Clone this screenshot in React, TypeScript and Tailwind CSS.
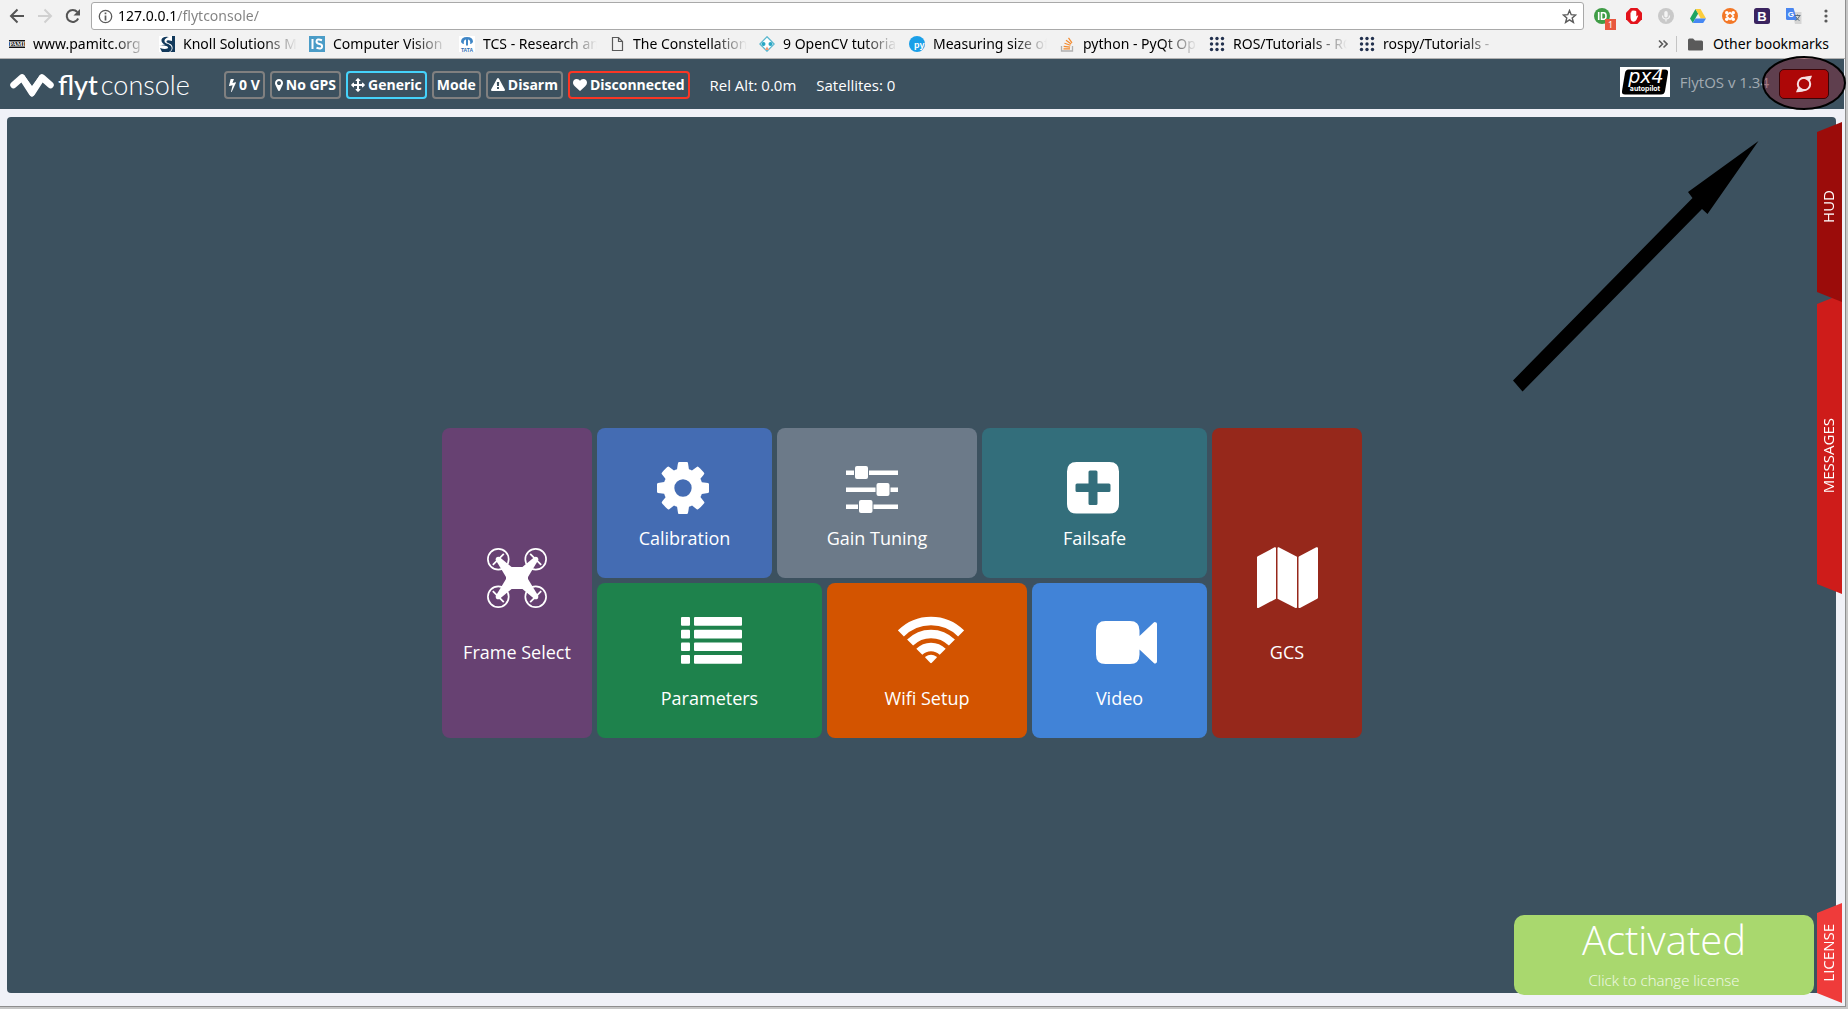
import React from "react";

type P = { children?: React.ReactNode };

/* ---------- small icon helpers ---------- */

function Glyph({ box, w, h, d }: { box: string; w: number; h: number; d: string }) {
  return (
    <svg viewBox={box} width={w} height={h} fill="currentColor" aria-hidden="true" className="shrink-0">
      <path d={d} />
    </svg>
  );
}

const BOLT =
  "M1333 566q18 20 7 44l-540 1157q-13 25-42 25-4 0-14-2-17-5-25.500-19t-4.500-30l197-808-406 101q-4 1-12 1-18 0-31-11-18-15-13-39l201-825q4-14 16-23t28-9h328q19 0 32 12.500t13 29.500q0 8-5 18l-171 463 396-98q8-2 12-2 19 0 34 15z";
const MARKER =
  "M1152 640q0-106-75-181t-181-75-181 75-75 181 75 181 181 75 181-75 75-181zm256 0q0 109-33 179l-364 774q-16 33-47.500 52t-67.500 19-67.500-19-46.500-52l-365-774q-33-70-33-179 0-212 150-362t362-150 362 150 150 362z";
const ARROWS =
  "M1792 896q0 26-19 45l-256 256q-19 19-45 19t-45-19-19-45v-128h-384v384h128q26 0 45 19t19 45-19 45l-256 256q-19 19-45 19t-45-19l-256-256q-19-19-19-45t19-45 45-19h128v-384h-384v128q0 26-19 45t-45 19-45-19l-256-256q-19-19-19-45t19-45l256-256q19-19 45-19t45 19 19 45v128h384v-384h-128q-26 0-45-19t-19-45 19-45l256-256q19-19 45-19t45 19l256 256q19 19 19 45t-19 45-45 19h-128v384h384v-128q0-26 19-45t45-19 45 19l256 256q19 19 19 45z";
const WARNING =
  "M1024 1375v-190q0-14-9.500-23.500t-22.500-9.500h-192q-13 0-22.500 9.500t-9.500 23.500v190q0 14 9.500 23.500t22.500 9.500h192q13 0 22.500-9.500t9.500-23.500zm-2-374l18-459q0-12-10-19-13-11-24-11h-220q-11 0-24 11-10 7-10 21l17 457q0 10 10 16.500t24 6.500h185q14 0 23.500-6.500t10.500-16.500zm-14-934l768 1408q35 63-2 126-17 29-46.500 46t-63.500 17h-1536q-34 0-63.500-17t-46.500-46q-37-63-2-126l768-1408q17-31 47-49t65-18 65 18 47 49z";
const HEART =
  "M896 1664q-26 0-44-18l-624-602q-10-8-27.500-26t-55.500-65.500-68-97.500-53.500-121-23.500-138q0-220 127-344t351-124q62 0 126.500 21.500t120 58 95.500 68.500 76 68q36-36 76-68t95.500-68.500 120-58 126.500-21.500q224 0 351 124t127 344q0 221-229 450l-623 600q-18 18-44 18z";
const COG =
  "M1152 896q0-106-75-181t-181-75-181 75-75 181 75 181 181 75 181-75 75-181zm512-109v222q0 12-8 23t-20 13l-185 28q-19 54-39 91 35 50 107 138 10 12 10 25t-9 23q-27 37-99 108t-94 71q-12 0-26-9l-138-108q-44 23-91 38-16 136-29 186-7 28-36 28h-222q-14 0-24.500-8.500t-11.500-21.500l-28-184q-49-16-90-37l-141 107q-10 9-25 9-14 0-25-11-126-114-165-168-7-10-7-23 0-12 8-23 15-21 51-66.500t54-70.500q-27-50-41-99l-183-27q-13-2-21-12.500t-8-23.500v-222q0-12 8-23t19-13l186-28q14-46 39-92-40-57-107-138-10-12-10-24 0-10 9-23 26-36 98.500-107.500t94.500-71.500q13 0 26 10l138 107q44-23 91-38 16-136 29-186 7-28 36-28h222q14 0 24.500 8.500t11.500 21.500l28 184q49 16 90 37l142-107q9-9 24-9 13 0 25 10 129 119 165 170 7 8 7 22 0 12-8 23-15 21-51 66.500t-54 70.500q26 50 41 98l183 28q13 2 21 12.500t8 23.500z";

function Svg({ w, h, children }: P & { w: number; h: number }) {
  return (
    <svg width={w} height={h} viewBox={`0 0 ${w} ${h}`} fill="none" aria-hidden="true" className="shrink-0">
      {children}
    </svg>
  );
}

/* ---------- tile icons ---------- */

function DroneIcon() {
  const rotors = [
    [11.3, 11.3],
    [48.7, 11.3],
    [11.3, 48.7],
    [48.7, 48.7],
  ];
  return (
    <Svg w={60} h={60}>
      <g fill="#fff" stroke="#fff">
        {rotors.map(([x, y]) => (
          <g key={`${x}-${y}`}>
            <circle cx={x} cy={y} r="10.400" fill="none" strokeWidth="1.700" />
            <circle cx={x} cy={y} r="2.600" stroke="none" />
            <path
              d={(x < 30) === (y < 30) ? `M${x - 5.5} ${y + 5.5}L${x + 5.5} ${y - 5.5}` : `M${x - 5.5} ${y - 5.5}L${x + 5.5} ${y + 5.5}`}
              strokeWidth="1.800"
            />
          </g>
        ))}
        <g stroke="none">
          <path d="M9 12.500 12.500 9 27 21v8h-8z" />
          <path d="M51 12.500 47.500 9 33 21v8h8z" />
          <path d="M9 47.500 12.500 51 27 39v-8h-8z" />
          <path d="M51 47.500 47.500 51 33 39v-8h8z" />
          <path d="M22 19h16l3 3v16l-3 3H22l-3-3V22z" />
        </g>
      </g>
    </Svg>
  );
}

function SlidersIcon() {
  return (
    <Svg w={52} h={47}>
      <g fill="#fff">
        <path d="M0 4.500h8v4.500H0zM23 4.500h29v4.500H23zM0 21.500h29.500v4.500H0zM44.500 21.500H52v4.500h-7.500zM0 38.500h12v4.500H0zM27.500 38.500H52v4.500H27.500z" />
        <rect x="9" y="0" width="13" height="13" rx="2" />
        <rect x="30.500" y="17" width="13" height="13" rx="2" />
        <rect x="13" y="34" width="13.500" height="13" rx="2" />
      </g>
    </Svg>
  );
}

function PlusSquareIcon() {
  return (
    <Svg w={52} h={52}>
      <path
        fill="#fff"
        fillRule="evenodd"
        d="M9.500 0h33Q52 0 52 9.500v32.500Q52 51.500 42.500 51.500h-33Q0 51.500 0 42V9.500Q0 0 9.500 0zM23 8.500q-1.500 0-1.500 1.500v11.500H10q-1.500 0-1.500 1.500v5.500q0 1.500 1.500 1.500h11.500v11.500q0 1.500 1.500 1.500h6q1.500 0 1.500-1.500V30H42q1.500 0 1.500-1.500V23q0-1.500-1.500-1.500H30.500V10q0-1.500-1.500-1.500z"
      />
    </Svg>
  );
}

function ListIcon() {
  return (
    <Svg w={61} h={48}>
      <g fill="#fff">
        {[1, 13.7, 26.4, 39.1].map((y) => (
          <g key={y}>
            <rect x="0" y={y} width="9" height="8.700" rx="1" />
            <rect x="13" y={y} width="48" height="8.700" rx="1" />
          </g>
        ))}
      </g>
    </Svg>
  );
}

function WifiIcon() {
  return (
    <Svg w={66} h={48}>
      <g stroke="#fff" strokeWidth="8.500" strokeLinejoin="round">
        <path d="M2.900 17.400A42.500 42.500 0 0 1 63.100 17.400" />
        <path d="M12.100 26.600A29.500 29.500 0 0 1 53.900 26.600" />
        <path d="M21.300 35.800A16.500 16.500 0 0 1 44.700 35.800" />
      </g>
      <path d="M27.300 40.800Q33 36.600 38.700 40.800 39 41.200 38.600 41.700L33.800 46.800Q33 47.500 32.200 46.800L27.400 41.700Q27 41.200 27.300 40.800z" fill="#fff" />
    </Svg>
  );
}

function VideoIcon() {
  return (
    <Svg w={61} h={48}>
      <path
        fill="#fff"
        d="M9.500 5h24.500q9.500 0 9.500 9.500V20L57.800 6.500Q58.500 5.800 59.500 6.200 61 6.500 61 8v37.500q0 1.500-1.500 2Q58.500 47.700 57.800 47L43.500 33.500v5q0 9.500-9.500 9.500H9.500Q0 48 0 38.500v-24Q0 5 9.500 5z"
      />
    </Svg>
  );
}

function MapIcon() {
  return (
    <Svg w={61} h={61}>
      <g fill="#fff">
        <path d="M.8 9.300 17.500.3q1.500-.6 1.500 1V51.700L1.500 61Q0 61.500 0 60V10.500q0-.8.800-1.200z" />
        <path d="M20.500 1q0-1 1.200-.7L40 9.800V60q0 1.300-1.500 1L20.500 51.700z" />
        <path d="M42.300 9.300 59.300.3Q61-.3 61 1.300V50.500q0 .8-.8 1.200L43 61q-1.500.500-1.500-1V10.500q0-.8.800-1.200z" />
      </g>
    </Svg>
  );
}

/* ---------- browser chrome ---------- */

const dots = [2.5, 8, 13.5];

const bookmarks: { label: string; icon: React.ReactNode }[] = [
  {
    label: "www.pamitc.org",
    icon: (
      <Svg w={16} h={16}>
        <path d="M0 4.500h16M0 11.500h16" stroke="#111" />
        <rect y="5.500" width="16" height="5" fill="#222" />
        <text x="8" y="10.300" fontSize="6" fontWeight="700" fill="#fff" textAnchor="middle" fontFamily="Liberation Serif">PAMI</text>
      </Svg>
    ),
  },
  {
    label: "Knoll Solutions Ma",
    icon: (
      <Svg w={16} h={16}>
        <rect width="16" height="16" fill="#fff" />
        <path d="M16 0v16h-5q3-2 2.500-5Q13 8 9 7 7 6.300 7.500 5 8.500 3.500 13 5V0z" fill="#12395b" />
        <path d="M0 9.500q4-.5 8 .8 2 1 .5 2.200-3 1-7.500-.5L3 16h7q3.500-2 2.500-5-1-2.500-5-3.500Q5 6.500 5.500 4.500 6 2 10 1 4 0 2.500 3.500 2 7 6 8.500z" fill="#12395b" />
      </Svg>
    ),
  },
  {
    label: "Computer Vision O",
    icon: (
      <Svg w={16} h={16}>
        <rect width="16" height="16" fill="#4a9cc7" />
        <path d="M3.500 3v10M13 4.200Q7.500 2.300 7.500 5.500 7.500 7.500 10.500 8t2.500 3q-.5 2.500-5.500.8" stroke="#fff" strokeWidth="2" />
      </Svg>
    ),
  },
  {
    label: "TCS - Research and",
    icon: (
      <Svg w={16} h={16}>
        <rect width="16" height="16" fill="#fff" />
        <path d="M2 6q0-5 6-5t6 5q-1 2-3 2 1-4-2-4.500v6H7v-6Q4 4 5 8 3 8 2 6z" fill="#3f86c6" />
        <text x="8" y="15.500" fontSize="5" fontWeight="700" fill="#2b6cb0" textAnchor="middle" fontFamily="Liberation Sans">TATA</text>
      </Svg>
    ),
  },
  {
    label: "The Constellation",
    icon: (
      <Svg w={16} h={16}>
        <path d="M3.500 1.500h6l4 4v9h-10zM9.500 1.500v4h4" stroke="#5a5a5a" strokeWidth="1.200" />
      </Svg>
    ),
  },
  {
    label: "9 OpenCV tutorials",
    icon: (
      <Svg w={16} h={16}>
        <path d="M8 .8 15.200 8 8 15.200.8 8z" stroke="#5bb8cf" strokeWidth="1.300" fill="#fff" />
        <path d="M6 14h4L8 10.500z" fill="#f19a7a" />
        <circle cx="4.500" cy="8" r="2" fill="#2aa7c4" />
        <circle cx="11.500" cy="8" r="2" fill="#2aa7c4" />
      </Svg>
    ),
  },
  {
    label: "Measuring size of",
    icon: (
      <Svg w={16} h={16}>
        <circle cx="8" cy="8" r="8" fill="#1a9fe8" />
        <text x="5" y="11.500" fontSize="9" fontWeight="700" fill="#fff" fontFamily="Liberation Sans">py</text>
      </Svg>
    ),
  },
  {
    label: "python - PyQt Op",
    icon: (
      <Svg w={16} h={16}>
        <path d="M2.500 10v5h11v-5" stroke="#b0b0b0" strokeWidth="1.300" />
        <path d="M4.500 12.800h6.500M4.700 10.300l6.400.8M5.500 7.300l6 2M7 4.300l5.200 3.700M9.500 1.800l3.500 5" stroke="#f28a2e" strokeWidth="1.200" />
      </Svg>
    ),
  },
  ...["ROS/Tutorials - RO", "rospy/Tutorials -"].map((label) => ({
    label,
    icon: (
      <Svg w={16} h={16}>
        {dots.flatMap((y) => dots.map((x) => <circle key={`${x}-${y}`} cx={x} cy={y} r="1.700" fill="#22314e" />))}
      </Svg>
    ),
  })),
];

const extensions: { name: string; icon: React.ReactNode; badge?: string }[] = [
  {
    name: "Pushbullet",
    badge: "1",
    icon: (
      <Svg w={16} h={16}>
        <circle cx="8" cy="8" r="8" fill="#3f9c46" />
        <path d="M4.700 4v8M7.500 4.700h2.300q2.200 0 2.200 3.300t-2.200 3.300H7.500z" stroke="#fff" strokeWidth="1.600" />
      </Svg>
    ),
  },
  {
    name: "AdBlock",
    icon: (
      <Svg w={16} h={16}>
        <path d="M4.700 0h6.600L16 4.700v6.600L11.300 16H4.700L0 11.300V4.700z" fill="#e3131b" />
        <path d="M4.500 9V5q0-1 1-.8V3q.8-1 1.600 0 .8-1.500 1.700 0 1-.8 1.500.5v5q1-1.500 2-1l-2 4.500q-.8 1.700-3 1.700Q4.500 13.500 4.500 9z" fill="#fff" />
      </Svg>
    ),
  },
  {
    name: "Voice",
    icon: (
      <Svg w={16} h={16}>
        <circle cx="8" cy="8" r="8" fill="#c9c9c9" />
        <rect x="6.300" y="3" width="3.400" height="6.500" rx="1.700" fill="#f4f4f4" />
        <path d="M4.500 7.500q0 3.500 3.500 3.500t3.500-3.500M8 11v2.500" stroke="#f4f4f4" strokeWidth="1.200" />
      </Svg>
    ),
  },
  {
    name: "Drive",
    icon: (
      <Svg w={16} h={16}>
        <path d="M5.500 1 8.200 5.500 2.800 15 0 10.500z" fill="#1da462" />
        <path d="M5.500 1h5L16 10.500h-5.300z" fill="#fccd3c" />
        <path d="M5.500 10.500H16L13.200 15H2.800z" fill="#4688f4" />
      </Svg>
    ),
  },
  {
    name: "Hub",
    icon: (
      <Svg w={16} h={16}>
        <circle cx="8" cy="8" r="8" fill="#f37726" />
        <path d="M8 4.500 11.500 8 8 11.500 4.500 8z" stroke="#fff" strokeWidth="1.500" />
        <circle cx="4.800" cy="4.800" r="1.800" fill="#fff" />
        <circle cx="11.200" cy="4.800" r="1.800" fill="#fff" />
        <circle cx="4.800" cy="11.200" r="1.800" fill="#fff" />
        <circle cx="11.200" cy="11.200" r="1.800" fill="#fff" />
      </Svg>
    ),
  },
  {
    name: "Bootstrap",
    icon: (
      <Svg w={16} h={16}>
        <rect width="16" height="16" rx="2.500" fill="#3b2460" />
        <text x="8" y="12.500" fontSize="13" fontWeight="700" fill="#fff" textAnchor="middle" fontFamily="Liberation Sans">B</text>
      </Svg>
    ),
  },
  {
    name: "Translate",
    icon: (
      <Svg w={16} h={16}>
        <path d="M6 4h9.500v12H9z" fill="#d5d5d5" />
        <path d="M0 0h7.500L11 12H1.500Q0 12 0 10.500z" fill="#4a86f0" />
        <path d="M8.500 7.500h6M11.500 6.500v1M13.500 8q-1 3-4 4.500M10 9q1 2.500 3.500 3.500" stroke="#5c6e7c" />
        <text x="4.800" y="9.200" fontSize="8" fontWeight="700" fill="#fff" textAnchor="middle" fontFamily="Liberation Sans">G</text>
      </Svg>
    ),
  },
];

function BrowserChrome() {
  return (
    <div className="border-b border-[#b0b0b0] bg-[#f2f2f2] pt-[2px] font-['Noto_Sans',sans-serif]">
      <div className="flex h-7 items-center pr-[11px]">
        <div className="flex w-[91px] shrink-0 items-center gap-3 pl-[9px]">
          <button aria-label="Back">
            <Svg w={16} h={16}>
              <path d="M15 8H2.500M8.500 1.500 2 8l6.500 6.500" stroke="#555" strokeWidth="2" />
            </Svg>
          </button>
          <button aria-label="Forward">
            <Svg w={16} h={16}>
              <path d="M1 8h12.500M7.500 1.500 14 8l-6.500 6.500" stroke="#d0d0d0" strokeWidth="2" />
            </Svg>
          </button>
          <button aria-label="Reload">
            <Svg w={16} h={16}>
              <path d="M13.200 10.500A6 6 0 1 1 12.300 4" stroke="#555" strokeWidth="2" />
              <path d="M15 1v6.500H8.500z" fill="#555" />
            </Svg>
          </button>
        </div>
        <div className="flex h-7 flex-1 items-center rounded-[3px] border border-[#a9a9a9] bg-white px-[6px]">
          <Svg w={15} h={15}>
            <circle cx="7.500" cy="7.500" r="6.200" stroke="#5a5a5a" strokeWidth="1.300" />
            <path d="M7.500 6.500v5M7.500 3.500v1.700" stroke="#5a5a5a" strokeWidth="1.700" />
          </Svg>
          <input
            aria-label="Address"
            defaultValue="127.0.0.1/flytconsole/"
            className="ml-[5px] min-w-0 flex-1 bg-[linear-gradient(to_right,#000_60px,#808080_60px)] bg-clip-text text-[14px] leading-5 text-transparent outline-none"
          />
          <button aria-label="Bookmark this page">
            <Svg w={15} h={15}>
              <path d="M7.500 1.500l1.700 4.200 4.500.3-3.500 2.900 1.200 4.500-3.900-2.500-3.900 2.500 1.200-4.500L1.300 6l4.500-.3z" stroke="#5a5a5a" strokeWidth="1.400" />
            </Svg>
          </button>
        </div>
        <div className="ml-[10px] flex items-center gap-4">
          {extensions.map((e) => (
            <button key={e.name} aria-label={e.name} className="relative">
              {e.icon}
              {e.badge && (
                <span className="absolute -bottom-1.5 -right-1.5 h-[11px] w-[11px] bg-[#e8573f] text-center text-[9px] leading-[11px] text-white">
                  {e.badge}
                </span>
              )}
            </button>
          ))}
          <button aria-label="Menu">
            <Svg w={16} h={16}>
              <circle cx="8" cy="3" r="1.600" fill="#5a5a5a" />
              <circle cx="8" cy="8" r="1.600" fill="#5a5a5a" />
              <circle cx="8" cy="13" r="1.600" fill="#5a5a5a" />
            </Svg>
          </button>
        </div>
      </div>
      <nav className="flex h-7 items-center pl-[9px] pr-4 text-[14px] leading-5 text-black" aria-label="Bookmarks">
        {bookmarks.map((b) => (
          <a key={b.label} href="#" className="flex w-[150px] items-center gap-2">
            {b.icon}
            <span className="w-[114px] overflow-hidden whitespace-nowrap [mask-image:linear-gradient(to_right,#000_70%,transparent)]">
              {b.label}
            </span>
          </a>
        ))}
        <button aria-label="More bookmarks" className="ml-auto">
          <Svg w={10} h={10}>
            <path d="M1 1.500 4.500 5 1 8.500M5.500 1.500 9 5 5.500 8.500" stroke="#5a5a5a" strokeWidth="1.600" />
          </Svg>
        </button>
        <span className="ml-2 h-4 w-px bg-[#c4c4c4]" />
        <a href="#" className="ml-[11px] flex items-center gap-[10px]">
          <Svg w={15} h={13}>
            <path d="M0 2q0-1.500 1.500-1.500H5L7 2.500h6.500Q15 2.500 15 4v7.500q0 1-1 1H1q-1 0-1-1z" fill="#5a5a5a" />
          </Svg>
          Other bookmarks
        </a>
      </nav>
    </div>
  );
}

/* ---------- application header ---------- */

function Badge({ children, tone }: P & { tone: "gray" | "cyan" | "red" }) {
  const border = { gray: "border-[#808080]", cyan: "border-[#45d3fb]", red: "border-[#fb3624]" }[tone];
  return (
    <button className={`flex h-7 items-center gap-[3px] whitespace-nowrap rounded-[4px] border-2 px-[3px] text-[14px] font-bold leading-5 text-white ${border}`}>
      {children}
    </button>
  );
}

function Header() {
  return (
    <header className="mr-px flex h-[50px] shrink-0 items-center bg-[#3c515f] pl-[10px] pr-[15px] text-white">
      <a href="#" className="flex w-[214px] shrink-0 items-center pt-0.5" aria-label="flytconsole">
        <Svg w={44} h={25}>
          <path d="M3.500 12 12 4.500 22 20 32 4.500 40.500 12" stroke="#fff" strokeWidth="6.500" strokeLinecap="round" strokeLinejoin="round" />
          <path d="M10 6 14 2l8 11 8-11 4 4-11 17.500h-2z" fill="#fff" />
        </Svg>
        <span className="ml-1 flex gap-[3px] font-['Lato',sans-serif] text-[27px] leading-8">
          <span className="font-medium">flyt</span>
          <span className="font-light">console</span>
        </span>
      </a>
      <div className="flex items-center gap-[5px] pt-0.5">
        <Badge tone="gray">
          <Glyph box="448 0 896 1792" w={7} h={14} d={BOLT} />0 V
        </Badge>
        <Badge tone="gray">
          <Glyph box="384 0 1024 1792" w={8} h={14} d={MARKER} />No GPS
        </Badge>
        <Badge tone="cyan">
          <Glyph box="0 0 1792 1792" w={14} h={14} d={ARROWS} />Generic
        </Badge>
        <Badge tone="gray">Mode</Badge>
        <Badge tone="gray">
          <Glyph box="0 0 1792 1792" w={14} h={14} d={WARNING} />Disarm
        </Badge>
        <Badge tone="red">
          <Glyph box="0 0 1792 1792" w={14} h={14} d={HEART} />Disconnected
        </Badge>
        <span className="ml-[15px] text-[15px] leading-5">Rel Alt: 0.0m</span>
        <span className="ml-[15px] text-[15px] leading-5">Satellites: 0</span>
      </div>

      <div className="ml-auto flex items-center">
        <div className="flex items-center pb-1">
          <svg width="50" height="30" viewBox="0 0 50 30" role="img" aria-label="PX4 autopilot">
            <rect width="50" height="30" fill="#fff" />
            <path d="M8.500 2.500H45q3.500 0 3 3.500l-3 18q-.6 3.500-4 3.500H5q-3.500 0-3-3.500L5 6q.6-3.500 3.500-3.500z" fill="#000" />
            <text x="26" y="16" fontSize="19" fontWeight="400" fontStyle="italic" fill="#fff" textAnchor="middle" fontFamily="DejaVu Sans">px4</text>
            <rect x="14" y="18" width="26" height="7" fill="#000" />
            <text x="25" y="24" fontSize="7" fontWeight="700" fill="#fff" textAnchor="middle" fontFamily="Inter">autopilot</text>
          </svg>
          <span className="ml-[10px] text-[15px] leading-5 text-[#a2abb2]">FlytOS v 1.34</span>
        </div>
        <div className="relative ml-[10px]">
          <svg width="86" height="56" viewBox="0 0 86 56" fill="none" aria-hidden="true" className="pointer-events-none absolute left-1/2 top-1/2 max-w-none -translate-x-1/2 -translate-y-1/2">
            <ellipse cx="43" cy="27" rx="41" ry="26" fill="#a02030" fillOpacity=".35" stroke="#000" strokeWidth="2" />
          </svg>
          <button aria-label="Restart" className="relative flex h-[30px] w-[50px] items-center justify-center rounded-[5px] border border-[#3a0508] bg-[#ad0707]">
            <Svg w={18} h={18}>
              <circle cx="9" cy="9" r="6.200" stroke="#f6dfe2" strokeWidth="2" />
              <path d="M6 3.300Q11 .5 17 .8 16.500 4 13.500 6.500 11.500 3.800 6 3.300zM12 14.700Q7 17.500 1 17.200 1.500 14 4.500 11.500 6.500 14.200 12 14.700z" fill="#f6dfe2" />
            </Svg>
          </button>
        </div>
      </div>
    </header>
  );
}

/* ---------- dashboard ---------- */

function Tile({ label, icon, color, icons, text }: { label: string; icon: React.ReactNode; color: string; icons: string; text: string }) {
  return (
    <button className={`flex flex-col items-center rounded-[8px] text-[18px] leading-6 text-white ${color}`}>
      <span className={icons}>{icon}</span>
      <span className={text}>{label}</span>
    </button>
  );
}

function Dashboard() {
  return (
    <div className="flex gap-[5px]">
      <Tile label="Frame Select" icon={<DroneIcon />} color="w-[150px] bg-[#674172]" icons="pt-[120px]" text="mt-8" />
      <div className="flex flex-col gap-[5px]">
        <div className="flex h-[150px] gap-[5px]">
          <Tile
            label="Calibration"
            icon={<Glyph box="128 128 1536 1536" w={52} h={52} d={COG} />}
            color="w-[175px] bg-[#446cb3]"
            icons="pr-1 pt-[34px]"
            text="mt-3"
          />
          <Tile label="Gain Tuning" icon={<SlidersIcon />} color="w-[200px] bg-[#6c7a89]" icons="pr-2.5 pt-[38px]" text="mt-[13px]" />
          <Tile label="Failsafe" icon={<PlusSquareIcon />} color="w-[225px] bg-[#336e7b]" icons="pr-1 pt-[34px]" text="mt-3" />
        </div>
        <div className="flex h-[155px] gap-[5px]">
          <Tile label="Parameters" icon={<ListIcon />} color="w-[225px] bg-[#1e824c]" icons="pl-1 pt-[33px]" text="mt-[22px]" />
          <Tile label="Wifi Setup" icon={<WifiIcon />} color="w-[200px] bg-[#d35400]" icons="pl-2 pt-[33px]" text="mt-[22px]" />
          <Tile label="Video" icon={<VideoIcon />} color="w-[175px] bg-[#4183d7]" icons="pl-3.5 pt-[33px]" text="mt-[22px]" />
        </div>
      </div>
      <Tile label="GCS" icon={<MapIcon />} color="w-[150px] bg-[#96281b]" icons="pt-[119px]" text="mt-8" />
    </div>
  );
}

function SideTab({ label, look }: { label: string; look: string }) {
  return (
    <button
      className={`flex w-[25px] items-center justify-center pr-[3px] text-[15px] leading-5 text-white [clip-path:polygon(0_10px,100%_0,100%_100%,0_calc(100%-10px))] ${look}`}
    >
      <span className="rotate-180 [writing-mode:vertical-rl]">{label}</span>
    </button>
  );
}

export default function App() {
  return (
    <div className="min-h-screen bg-[#c6c6c6] pb-[2px] pr-[2px] font-['Open_Sans',sans-serif]">
      <div className="flex min-h-[calc(100vh-2px)] flex-col border-b border-r border-[#8e8e8e] bg-[#f0f1f7]">
        <BrowserChrome />
        <Header />
        <main className="relative flex flex-1 pb-[13px] pl-[7px] pr-[9px] pt-2">
          <section className="flex flex-1 items-center justify-center rounded-[4px] bg-[#3c515f] pr-[39px] pt-14">
            <Dashboard />
          </section>

          <svg width="250" height="255" viewBox="0 0 250 255" aria-hidden="true" className="pointer-events-none absolute right-[85px] top-[31px]">
            <path d="M248.500 1 178 52l4.500 6L3 240.500l9.500 11L192 69l5.500 5z" fill="#000" />
          </svg>

          <div className="absolute bottom-[3px] right-[3px] top-[13px] flex flex-col">
            <SideTab label="HUD" look="z-10 h-[180px] bg-[#9b0c0a] pb-3" />
            <SideTab label="MESSAGES" look="-mt-2 h-[300px] bg-[#ce1c1a] pt-6" />
            <SideTab label="LICENSE" look="mt-auto h-[100px] bg-[#ef3b3a]" />
          </div>

          <button className="absolute bottom-[11px] right-[31px] flex h-20 w-[300px] flex-col items-center rounded-[10px] bg-[#a9d86e] font-light text-white">
            <span className="text-[40px] leading-[50px]">Activated</span>
            <span className="text-[15px] leading-[30px] text-white/85">Click to change license</span>
          </button>
        </main>
      </div>
    </div>
  );
}
